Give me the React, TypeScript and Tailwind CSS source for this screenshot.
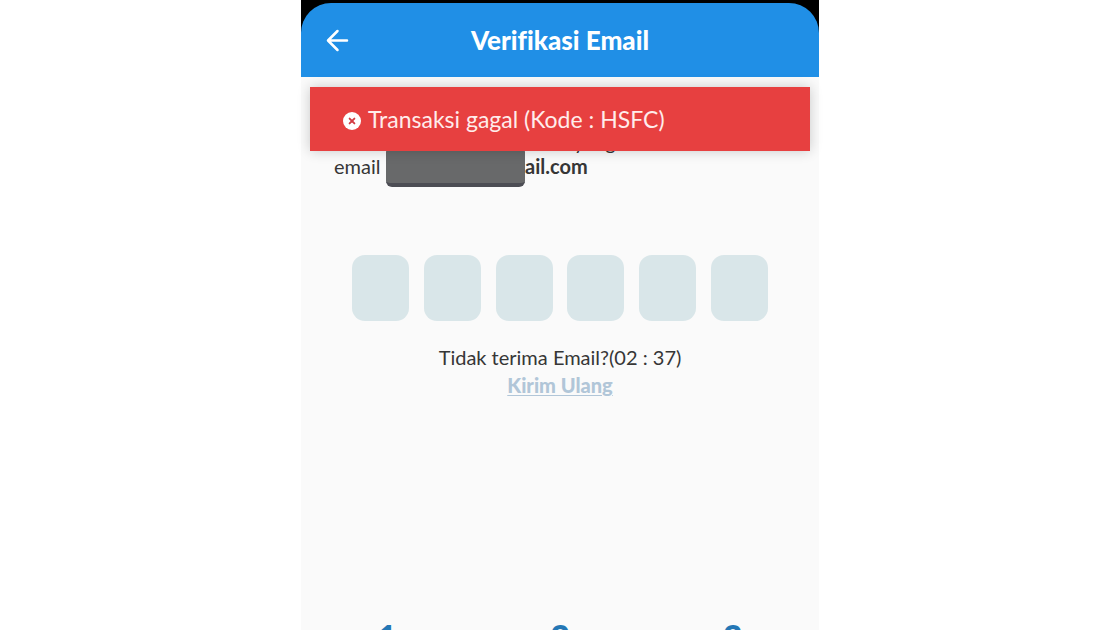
import React from "react";

function BackIcon() {
  return (
    <svg viewBox="0 0 24 24" className="size-6" fill="none" stroke="currentColor" strokeWidth="2.5" strokeLinecap="round" strokeLinejoin="round" aria-hidden="true">
      <path d="M22 12.5H3.5M12.5 3L3 12.5l9.5 9.5" />
    </svg>
  );
}

function ErrorIcon() {
  return (
    <svg viewBox="0 0 18 18" className="mt-1 size-[18px] shrink-0" aria-hidden="true">
      <circle cx="9" cy="9" r="9" fill="#fff" />
      <path d="M6.6 6.6l4.8 4.8M11.4 6.6l-4.8 4.8" stroke="#d23c44" strokeWidth="1.9" strokeLinecap="round" />
    </svg>
  );
}

const slots = [1, 2, 3, 4, 5, 6];
const keys = ["1", "2", "3"];

export default function App() {
  return (
    <div className="h-screen overflow-hidden bg-white font-['Lato','Liberation_Sans',sans-serif] text-[#363636]">
      <div className="mx-auto flex h-full w-full max-w-[518px] flex-col bg-[#fafafa]">
        <div className="bg-black pt-[3px]">
          <header className="grid h-[74px] grid-cols-[48px_1fr_48px] items-center rounded-t-[30px] bg-[#208fe6] px-3 text-white">
            <button type="button" aria-label="Kembali" className="flex size-12 items-center justify-center">
              <BackIcon />
            </button>
            <h1 className="text-center text-[26px] font-black [font-variant-ligatures:none]">Verifikasi Email</h1>
          </header>
        </div>

        <main className="relative flex flex-1 flex-col">
          <div role="alert" className="absolute inset-x-[9px] top-[10px] z-10 flex h-16 items-center gap-[7px] bg-[#e74040] px-[33px] text-[23px] text-[#ffeceb] shadow-[0_0_12px_rgba(0,0,0,0.2)]">
            <ErrorIcon />
            <span>Transaksi gagal (Kode : HSFC)</span>
          </div>

          <div className="px-[33px] pt-[53px] text-[20px] leading-6">
            <p className="pl-60">yang</p>
            <div className="flex">
              <span className="w-[52px]">email</span>
              <span className="-mt-2 h-[41px] w-[139px] rounded-md border-b-4 border-[#4c4d54] bg-[#68696a]" />
              <strong className="font-bold">ail.com</strong>
            </div>
          </div>

          <form className="mt-[68px] flex justify-between px-[51px]">
            {slots.map((n) => (
              <input key={n} aria-label={`Digit ${n}`} inputMode="numeric" maxLength={1} className="h-[66px] w-[57px] rounded-[13px] bg-[#d9e6e9] text-center text-2xl outline-none" />
            ))}
          </form>

          <div className="mt-[22px] flex flex-col items-center text-[20px] leading-7">
            <p>Tidak terima Email?(02 : 37)</p>
            <button type="button" className="font-black text-[#b1c6d8] underline decoration-1 underline-offset-2">
              Kirim Ulang
            </button>
          </div>

          <div className="mt-[218px] grid grid-cols-3 text-[34px] font-black leading-10 text-[#2477b5]">
            {keys.map((k) => (
              <button key={k} type="button">{k}</button>
            ))}
          </div>
        </main>
      </div>
    </div>
  );
}
